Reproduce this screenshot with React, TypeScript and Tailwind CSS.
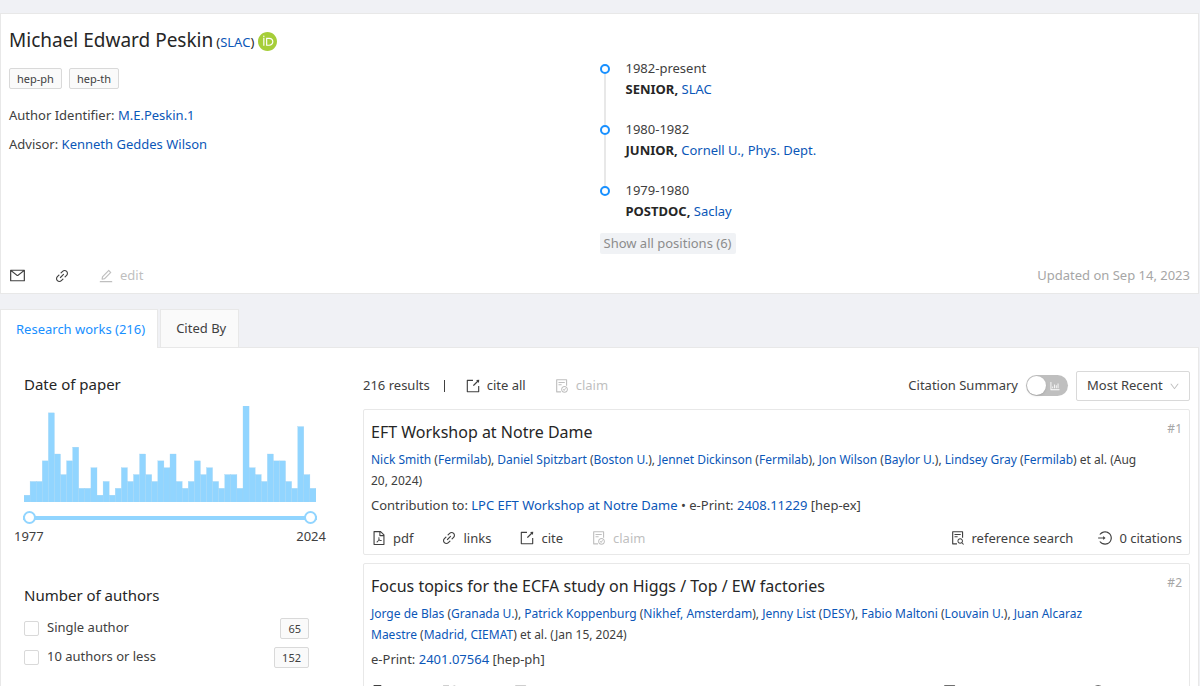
import React from "react";
import {
    AiOutlineBarChart,
    AiOutlineDown,
    AiOutlineEdit,
    AiOutlineExport,
    AiOutlineFileDone,
    AiOutlineFilePdf,
    AiOutlineFileSearch,
    AiOutlineLink,
    AiOutlineLogin,
    AiOutlineMail,
} from "react-icons/ai";
import { SiOrcid } from "react-icons/si";

interface IAuthor {
    name: string;
    affiliation: string;
}

interface IPaper {
    title: string;
    authors: IAuthor[];
    date: string;
    conference?: string;
    eprint: string;
    category: string;
    hasLinks: boolean;
    citations: string;
}

const positions = [
    { years: "1982-present", rank: "SENIOR", place: "SLAC" },
    { years: "1980-1982", rank: "JUNIOR", place: "Cornell U., Phys. Dept." },
    { years: "1979-1980", rank: "POSTDOC", place: "Saclay" },
];

// papers per year, 1977 to 2024
const papersPerYear = [
    1, 3, 3, 6, 13, 7, 4, 6, 8, 2, 2, 5, 1, 3, 1, 2, 5, 3, 4, 7, 4, 3, 6, 5,
    7, 3, 2, 3, 6, 4, 5, 3, 2, 4, 4, 2, 14, 5, 4, 3, 7, 6, 6, 3, 2, 11, 4, 2,
];

const papers: IPaper[] = [
    {
        title: "EFT Workshop at Notre Dame",
        authors: [
            { name: "Nick Smith", affiliation: "Fermilab" },
            { name: "Daniel Spitzbart", affiliation: "Boston U." },
            { name: "Jennet Dickinson", affiliation: "Fermilab" },
            { name: "Jon Wilson", affiliation: "Baylor U." },
            { name: "Lindsey Gray", affiliation: "Fermilab" },
        ],
        date: "Aug 20,\u00a02024",
        conference: "LPC EFT Workshop at Notre Dame",
        eprint: "2408.11229",
        category: "hep-ex",
        hasLinks: true,
        citations: "0 citations",
    },
    {
        title: "Focus topics for the ECFA study on Higgs / Top / EW factories",
        authors: [
            { name: "Jorge de Blas", affiliation: "Granada U." },
            { name: "Patrick Koppenburg", affiliation: "Nikhef, Amsterdam" },
            { name: "Jenny List", affiliation: "DESY" },
            { name: "Fabio Maltoni", affiliation: "Louvain U." },
            { name: "Juan Alcaraz Maestre", affiliation: "Madrid, CIEMAT" },
        ],
        date: "Jan 15,\u00a02024",
        eprint: "2401.07564",
        category: "hep-ph",
        hasLinks: false,
        citations: "20 citations",
    },
];

function Link({ children }: { children: React.ReactNode }) {
    return (
        <a href="#" className="text-[#0b57b8] hover:text-[#1890ff]">
            {children}
        </a>
    );
}

function Tag({ children }: { children: React.ReactNode }) {
    return (
        <span className="inline-block rounded-xs border border-[#d9d9d9] bg-[#fafafa] px-[7px] text-[11px] leading-[19px] text-[#404040]">
            {children}
        </span>
    );
}

function Action({ icon, label, disabled }: { icon: React.ReactNode; label: string; disabled?: boolean }) {
    return (
        <button
            type="button"
            disabled={disabled}
            className="flex items-center gap-[6px] text-[#404040] disabled:text-[#bfbfbf]"
        >
            {icon}
            {label}
        </button>
    );
}

function AuthorHeader() {
    return (
        <section className="grid grid-cols-2 border border-[#e8e8e8] bg-white px-2 pt-3 pb-[7px]">
            <div>
                <div className="flex items-center gap-1">
                    <h1 className="text-[19px] leading-7 text-[#262626]">
                        Michael Edward Peskin
                        <span className="ml-[3px] text-[13px]">
                            (<Link>SLAC</Link>)
                        </span>
                    </h1>
                    <a href="#" aria-label="ORCID" className="text-[#a6ce39]">
                        <SiOrcid size={19} />
                    </a>
                </div>
                <div className="mt-3 flex gap-[7px]">
                    <Tag>hep-ph</Tag>
                    <Tag>hep-th</Tag>
                </div>
                <p className="mt-4 leading-[21px]">
                    Author Identifier: <Link>M.E.Peskin.1</Link>
                </p>
                <p className="mt-2 leading-[21px]">
                    Advisor: <Link>Kenneth Geddes Wilson</Link>
                </p>
            </div>

            <div className="pt-8">
                <ol>
                    {positions.map((position, i) => (
                        <li key={position.years} className="flex gap-4">
                            {/* Dot and line */}
                            <div className="flex w-[10px] flex-col items-center pt-[6px]">
                                <span className="h-[10px] w-[10px] shrink-0 rounded-full border-2 border-[#1890ff]" />
                                {i < positions.length - 1 && <span className="-mb-[6px] w-[2px] flex-1 bg-[#e8e8e8]" />}
                            </div>
                            <div className={i < positions.length - 1 ? "pb-[19px] leading-[21px]" : "pb-[11px] leading-[21px]"}>
                                <div>{position.years}</div>
                                <strong className="font-bold text-[#262626]">{position.rank},</strong>{" "}
                                <Link>{position.place}</Link>
                            </div>
                        </li>
                    ))}
                </ol>
                <button type="button" className="rounded-xs bg-[#f0f2f5] px-1 leading-[21px] text-[#8c8c8c]">
                    Show all positions (6)
                </button>
            </div>

            <div className="col-span-2 mt-3 flex items-center justify-between">
                <div className="flex items-center gap-7">
                    <button type="button" aria-label="Email" className="text-[#404040]">
                        <AiOutlineMail size={17} />
                    </button>
                    <button type="button" aria-label="Links" className="text-[#404040]">
                        <AiOutlineLink size={16} />
                    </button>
                    <Action icon={<AiOutlineEdit size={16} />} label="edit" disabled />
                </div>
                <span className="text-[#a6a6a6]">Updated on Sep 14, 2023</span>
            </div>
        </section>
    );
}

function DateFilter() {
    const max = Math.max(...papersPerYear);
    const range =
        "pointer-events-none col-start-1 row-start-1 h-1 appearance-none [&::-webkit-slider-thumb]:pointer-events-auto [&::-webkit-slider-thumb]:h-[13px] [&::-webkit-slider-thumb]:w-[13px] [&::-webkit-slider-thumb]:appearance-none [&::-webkit-slider-thumb]:rounded-full [&::-webkit-slider-thumb]:border-2 [&::-webkit-slider-thumb]:border-[#91d5ff] [&::-webkit-slider-thumb]:bg-white";

    return (
        <div>
            <h2 className="text-[15px] leading-6 text-[#262626]">Date of paper</h2>
            <svg
                viewBox={`0 0 ${papersPerYear.length * 6} 95`}
                preserveAspectRatio="none"
                className="mt-[10px] h-24 w-full"
            >
                {papersPerYear.map((count, i) => {
                    const height = (count / max) * 95;
                    return (
                        <rect
                            key={i}
                            x={i * 6}
                            y={95 - height}
                            width={6}
                            height={height}
                            fill="#91d5ff"
                            stroke="#a3d3f2"
                            strokeWidth={0.3}
                        />
                    );
                })}
            </svg>
            {/* Year range */}
            <div className="-mx-px mt-[14px] grid items-center">
                <input
                    type="range"
                    aria-label="From year"
                    min={1977}
                    max={2024}
                    defaultValue={1977}
                    className={`${range} bg-[#91d5ff]`}
                />
                <input
                    type="range"
                    aria-label="To year"
                    min={1977}
                    max={2024}
                    defaultValue={2024}
                    className={`${range} bg-transparent`}
                />
            </div>
            <div className="-mx-[10px] mt-[6px] flex justify-between leading-[21px]">
                <span>1977</span>
                <span>2024</span>
            </div>
        </div>
    );
}

function AuthorsFilter() {
    const options = [
        { label: "Single author", count: 65 },
        { label: "10 authors or less", count: 152 },
    ];

    return (
        <div className="mt-9">
            <h2 className="text-[15px] leading-6 text-[#262626]">Number of authors</h2>
            <div className="mt-[11px] mr-[7px] space-y-2">
                {options.map((option) => (
                    <div key={option.label} className="flex items-center justify-between">
                        <label className="flex items-center gap-2">
                            <input
                                type="checkbox"
                                className="h-[15px] w-[15px] appearance-none rounded-xs border border-[#d9d9d9] bg-white checked:bg-[#1890ff]"
                            />
                            {option.label}
                        </label>
                        <Tag>{option.count}</Tag>
                    </div>
                ))}
            </div>
        </div>
    );
}

function PaperCard({ paper, index }: { paper: IPaper; index: number }) {
    return (
        <article className="rounded-xs border border-[#e8e8e8] px-[7px] pt-[10px] pb-[5px]">
            <div className="flex justify-between">
                <h3 className="text-base leading-6">
                    <a href="#" className="text-[#262626]">
                        {paper.title}
                    </a>
                </h3>
                <span className="text-xs leading-[18px] text-[#a6a6a6]">#{index}</span>
            </div>
            <p className="mt-[5px] pr-3 text-xs leading-[21px]">
                {paper.authors.map((author, i) => (
                    <React.Fragment key={author.name}>
                        <Link>{author.name}</Link>&nbsp;(<Link>{author.affiliation}</Link>)
                        {i < paper.authors.length - 1 ? ", " : " "}
                    </React.Fragment>
                ))}
                et al. ({paper.date})
            </p>
            <p className="mt-1 leading-[21px]">
                {paper.conference && (
                    <>
                        Contribution to: <Link>{paper.conference}</Link> •{" "}
                    </>
                )}
                e-Print: <Link>{paper.eprint}</Link> [{paper.category}]
            </p>
            <div className="mt-3 flex items-center justify-between leading-[21px]">
                <div className="flex gap-7">
                    <Action icon={<AiOutlineFilePdf size={16} />} label="pdf" />
                    {paper.hasLinks && <Action icon={<AiOutlineLink size={16} />} label="links" />}
                    <Action icon={<AiOutlineExport size={16} />} label="cite" />
                    <Action icon={<AiOutlineFileDone size={16} />} label="claim" disabled />
                </div>
                <div className="flex gap-6">
                    <Action icon={<AiOutlineFileSearch size={16} />} label="reference search" />
                    <Action icon={<AiOutlineLogin size={16} />} label={paper.citations} />
                </div>
            </div>
        </article>
    );
}

function ResultsBar() {
    return (
        <div className="flex items-center justify-between">
            <div className="flex items-center">
                <span>216 results</span>
                <span className="mx-[14px] h-3 w-px bg-[#404040]" />
                <div className="ml-[6px] flex gap-7">
                    <Action icon={<AiOutlineExport size={16} />} label="cite all" />
                    <Action icon={<AiOutlineFileDone size={16} />} label="claim" disabled />
                </div>
            </div>
            <div className="flex items-center gap-2">
                <label htmlFor="citation-summary">Citation Summary</label>
                <div className="relative h-[21px] w-[42px]">
                    <input
                        id="citation-summary"
                        type="checkbox"
                        role="switch"
                        className="block h-[21px] w-[42px] appearance-none rounded-full bg-[#bfbfbf] p-px before:block before:h-[19px] before:w-[19px] before:rounded-full before:bg-white before:shadow"
                    />
                    <AiOutlineBarChart size={12} className="pointer-events-none absolute top-[5px] right-[7px] text-white" />
                </div>
                <div className="relative">
                    <select
                        aria-label="Sort by"
                        className="h-[30px] w-[114px] appearance-none rounded-xs border border-[#d9d9d9] bg-white pl-[10px] text-[#404040]"
                    >
                        <option>Most Recent</option>
                        <option>Most Cited</option>
                    </select>
                    <AiOutlineDown size={11} className="pointer-events-none absolute top-[10px] right-[10px] text-[#bfbfbf]" />
                </div>
            </div>
        </div>
    );
}

export default function App() {
    return (
        <div className="min-h-screen bg-[#f0f1f5] pt-[13px] pr-px font-['Noto_Sans',sans-serif] text-[13px] text-[#404040]">
            <AuthorHeader />

            {/* Tabs */}
            <nav className="mt-[15px] flex gap-[2px]">
                <a
                    href="#"
                    className="z-10 -mb-px border border-b-0 border-[#e8e8e8] bg-white pr-3 pl-[15px] leading-[38px] text-[#1890ff]"
                >
                    Research works (216)
                </a>
                <a href="#" className="border border-b-0 border-[#e8e8e8] bg-[#fafafa] pr-3 pl-[15px] leading-[37px]">
                    Cited By
                </a>
            </nav>

            <main className="flex gap-[47px] border border-[#e8e8e8] bg-white pt-[23px] pr-2 pl-[23px]">
                <aside className="w-[292px] shrink-0 pt-[1px]">
                    <DateFilter />
                    <AuthorsFilter />
                </aside>
                <div className="min-w-0 flex-1 space-y-2">
                    <ResultsBar />
                    {papers.map((paper, i) => (
                        <PaperCard key={paper.eprint} paper={paper} index={i + 1} />
                    ))}
                </div>
            </main>
        </div>
    );
}
